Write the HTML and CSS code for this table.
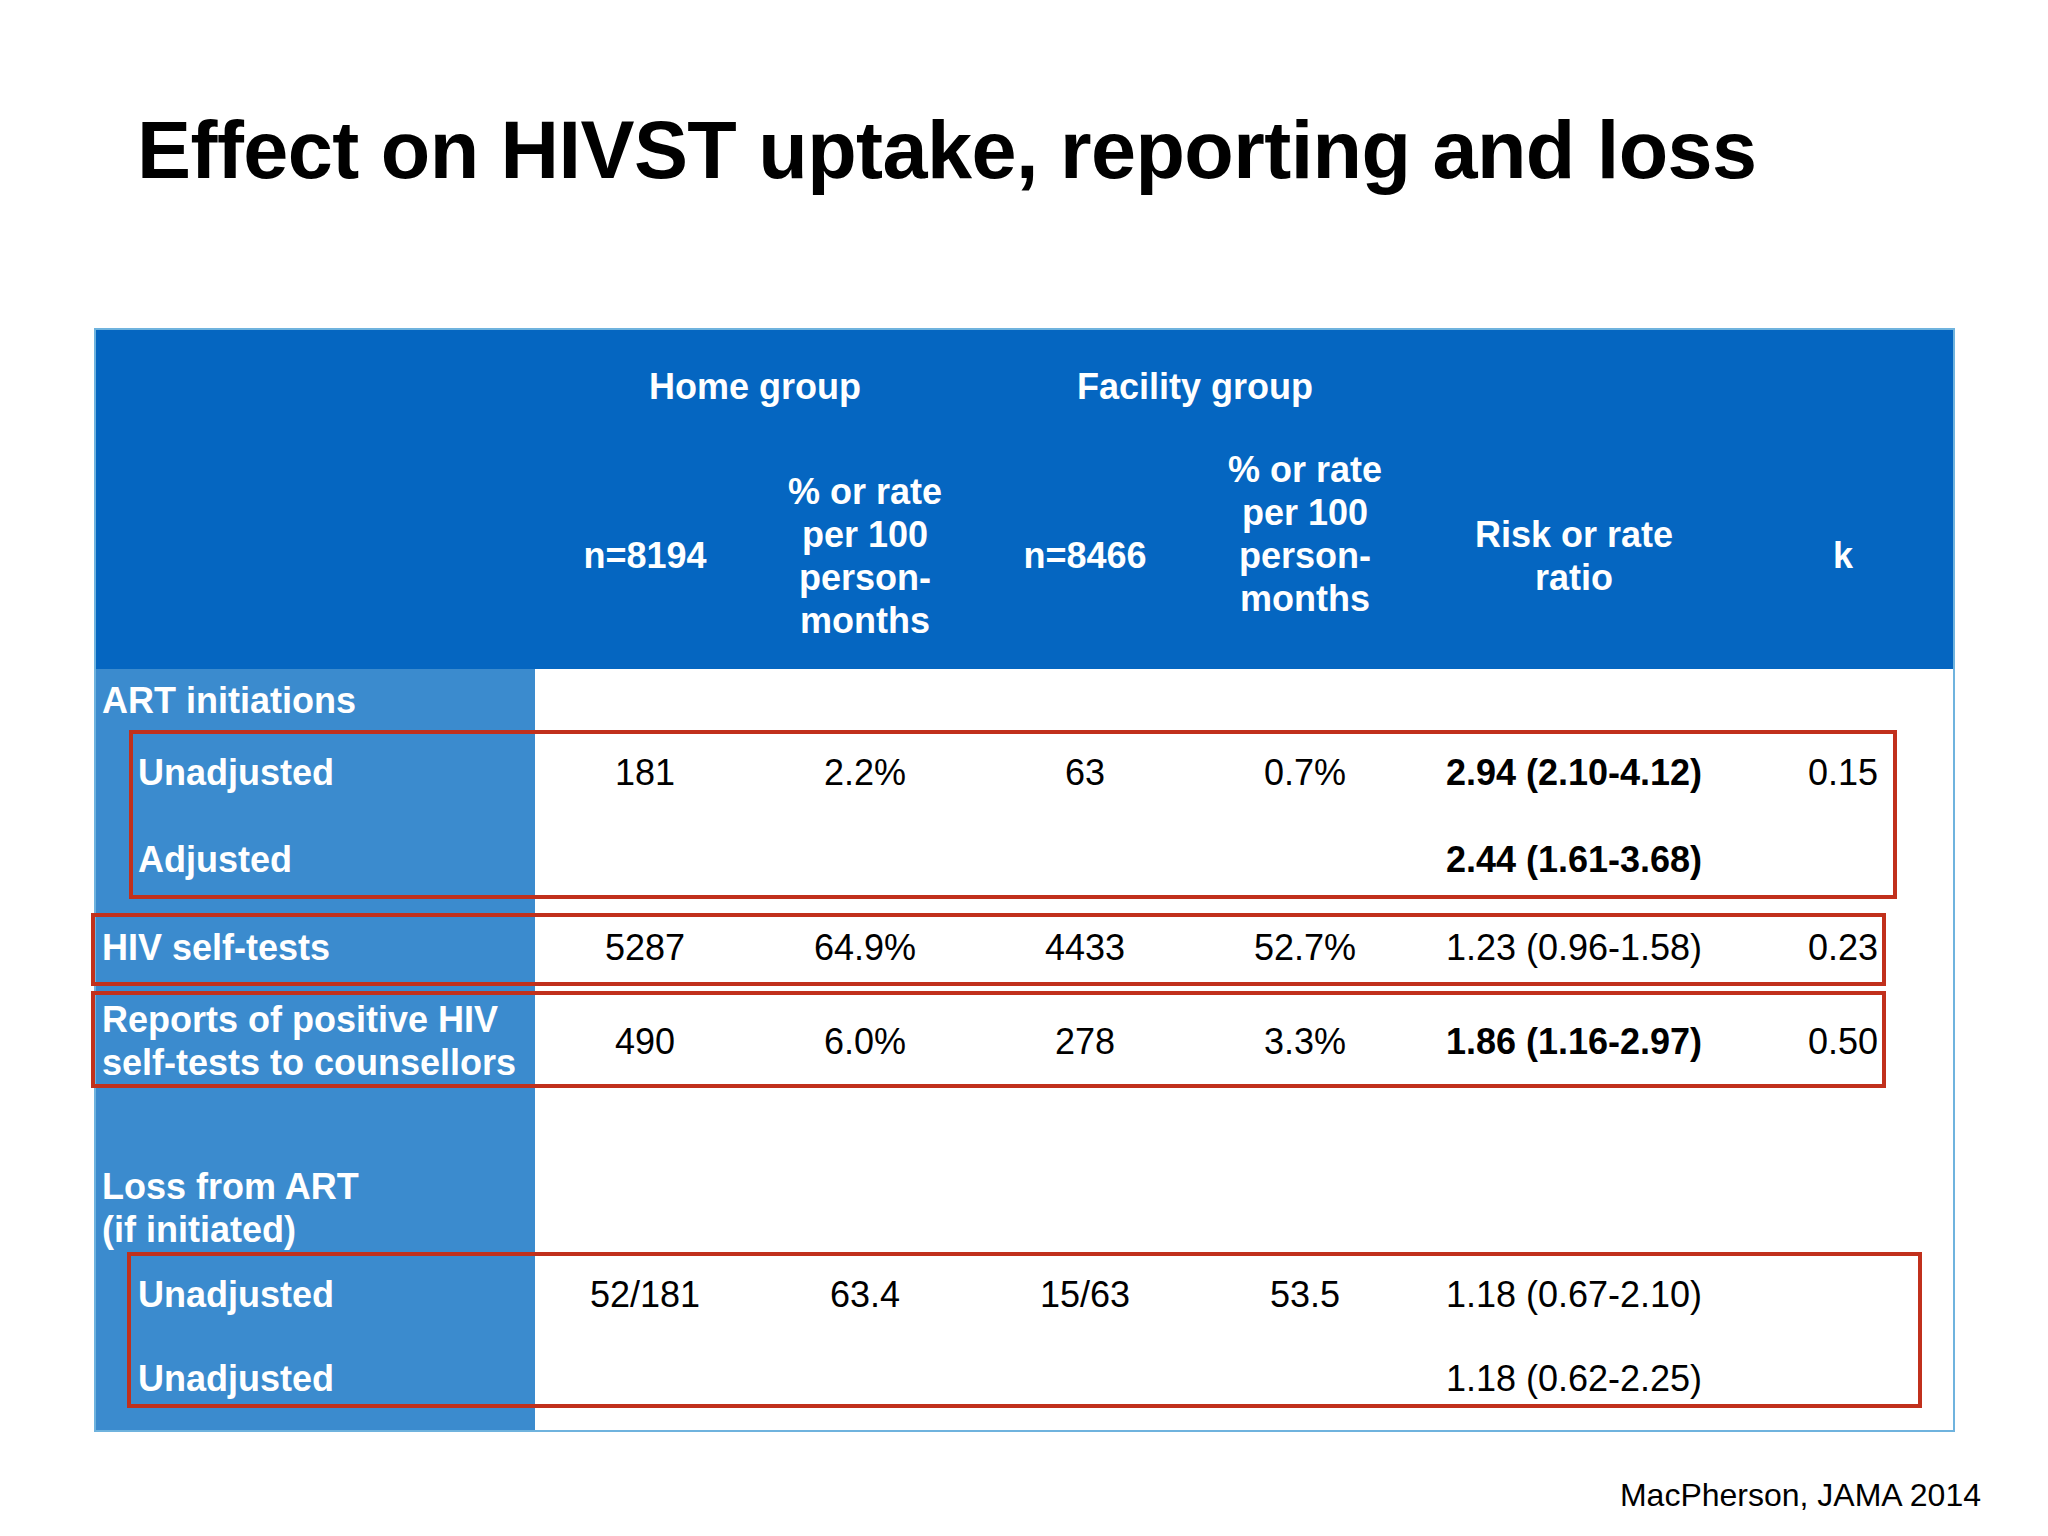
FILE: index.html
```html
<!DOCTYPE html>
<html lang="en">
<head>
<meta charset="utf-8">
<title>Effect on HIVST uptake, reporting and loss</title>
<link rel="stylesheet" href="styles.css">
</head>
<body>
<div class="slide">
  <h1 class="title">Effect on HIVST uptake, reporting and loss</h1>

  <div class="table">
    <!-- header row 1 -->
    <div class="h"></div>
    <div class="h span2">Home group</div>
    <div class="h span2">Facility group</div>
    <div class="h"></div>
    <div class="h"></div>

    <!-- header row 2 -->
    <div class="h"></div>
    <div class="h">n=8194</div>
    <div class="h">% or rate<br>per 100<br>person-<br>months</div>
    <div class="h">n=8466</div>
    <div class="h up">% or rate<br>per 100<br>person-<br>months</div>
    <div class="h">Risk or rate<br>ratio</div>
    <div class="h">k</div>

    <!-- ART initiations -->
    <div class="lab">ART initiations</div>
    <div class="d span6"></div>

    <div class="lab sub">Unadjusted</div>
    <div class="d">181</div>
    <div class="d">2.2%</div>
    <div class="d">63</div>
    <div class="d">0.7%</div>
    <div class="d b">2.94 (2.10-4.12)</div>
    <div class="d">0.15</div>

    <div class="lab sub">Adjusted</div>
    <div class="d"></div>
    <div class="d"></div>
    <div class="d"></div>
    <div class="d"></div>
    <div class="d b">2.44 (1.61-3.68)</div>
    <div class="d"></div>

    <!-- HIV self-tests -->
    <div class="lab">HIV self-tests</div>
    <div class="d">5287</div>
    <div class="d">64.9%</div>
    <div class="d">4433</div>
    <div class="d">52.7%</div>
    <div class="d">1.23 (0.96-1.58)</div>
    <div class="d">0.23</div>

    <!-- Reports -->
    <div class="lab">Reports of positive HIV<br>self-tests to counsellors</div>
    <div class="d">490</div>
    <div class="d">6.0%</div>
    <div class="d">278</div>
    <div class="d">3.3%</div>
    <div class="d b">1.86 (1.16-2.97)</div>
    <div class="d">0.50</div>

    <!-- spacer -->
    <div class="lab"></div>
    <div class="d span6"></div>

    <!-- Loss from ART -->
    <div class="lab">Loss from ART<br>(if initiated)</div>
    <div class="d span6"></div>

    <div class="lab sub">Unadjusted</div>
    <div class="d">52/181</div>
    <div class="d">63.4</div>
    <div class="d">15/63</div>
    <div class="d">53.5</div>
    <div class="d">1.18 (0.67-2.10)</div>
    <div class="d"></div>

    <div class="lab sub">Unadjusted</div>
    <div class="d"></div>
    <div class="d"></div>
    <div class="d"></div>
    <div class="d"></div>
    <div class="d">1.18 (0.62-2.25)</div>
    <div class="d"></div>

    <!-- bottom padding row -->
    <div class="lab"></div>
    <div class="d span6"></div>

    <!-- highlight boxes -->
    <div class="hl hl-1"></div>
    <div class="hl hl-2"></div>
    <div class="hl hl-3"></div>
    <div class="hl hl-4"></div>
  </div>

  <div class="source">MacPherson, JAMA 2014</div>
</div>
</body>
</html>
```

FILE: styles.css
```css
html, body {
  margin: 0;
  padding: 0;
  background: #ffffff;
}

body {
  font-family: "Liberation Sans", Arial, sans-serif;
  color: #000000;
}

.slide {
  width: 2048px;
  height: 1536px;
  display: flex;
  flex-direction: column;
  box-sizing: border-box;
  padding-top: 102px;
}

.title {
  margin: 0 0 0 137px;
  font-size: 81px;
  line-height: 96px;
  font-weight: 700;
  letter-spacing: -0.55px;
}

.table {
  position: relative;
  margin: 130px 0 0 94px;
  width: 1861px;
  box-sizing: border-box;
  border: 2px solid #6fb3de;
  display: grid;
  grid-template-columns: 439px 220px 220px 220px 220px 318px 220px;
  grid-template-rows: 112px 227px 63px 80px 94px 82px 106px 66px 96px 76px 92px 6px;
  font-size: 36px;
  line-height: 43px;
}

.span2 { grid-column: span 2; }
.span6 { grid-column: span 6; }

.h {
  background: #0566c1;
  color: #ffffff;
  font-weight: 700;
  display: flex;
  align-items: center;
  justify-content: center;
  text-align: center;
}

.h.up {
  padding-bottom: 43px;
  box-sizing: border-box;
}

.lab {
  background: #3b8bce;
  color: #ffffff;
  font-weight: 700;
  display: flex;
  align-items: center;
  padding-left: 6px;
  white-space: nowrap;
}

.lab.sub {
  padding-left: 42px;
}

.d {
  background: #ffffff;
  display: flex;
  align-items: center;
  justify-content: center;
  text-align: center;
  white-space: nowrap;
}

.d.b {
  font-weight: 700;
}

.hl {
  position: absolute;
  box-sizing: border-box;
  border: 4px solid #c1301c;
}

.hl-1 { left: 33px; top: 400px; width: 1768px; height: 169px; }
.hl-2 { left: -5px; top: 583px; width: 1795px; height: 73px; }
.hl-3 { left: -5px; top: 661px; width: 1795px; height: 97px; }
.hl-4 { left: 31px; top: 922px; width: 1795px; height: 156px; }

.source {
  align-self: flex-end;
  margin: 43px 67px 0 0;
  font-size: 32px;
  line-height: 40px;
}
```
